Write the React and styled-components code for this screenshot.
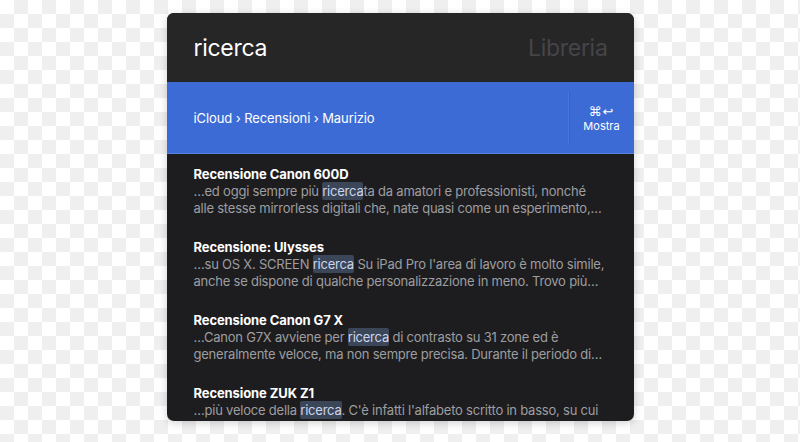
import React from "react";
import styled, { createGlobalStyle } from "styled-components";

const Global = createGlobalStyle`
  html, body { margin: 0; padding: 0; }
  body {
    width: 800px;
    height: 442px;
    overflow: hidden;
    background-color: #ffffff;
    background-image:
      linear-gradient(45deg, #efefef 25%, transparent 25%, transparent 75%, #efefef 75%),
      linear-gradient(45deg, #efefef 25%, transparent 25%, transparent 75%, #efefef 75%);
    background-size: 28px 28px;
    background-position: 0 0, 14px 14px;
    font-family: Inter, "Liberation Sans", Arial, sans-serif;
  }
`;

const Page = styled.div`
  display: flex;
  justify-content: center;
  padding-top: 13px;
`;

const Panel = styled.div`
  width: 467px;
  height: 408px;
  border-radius: 7px;
  overflow: hidden;
  background: #1d1d1f;
  display: flex;
  flex-direction: column;
  box-shadow: 0 2px 8px rgba(0, 0, 0, 0.18);
`;

const Header = styled.div`
  height: 69px;
  flex: none;
  background: #262627;
  display: flex;
  align-items: center;
  justify-content: space-between;
  padding: 0 26px 0 27px;
  box-sizing: border-box;
`;

const Title = styled.div`
  font-size: 23px;
  letter-spacing: -0.3px;
  color: ${(p) => (p.$muted ? "#454547" : "#ffffff")};
`;

const Bar = styled.div`
  height: 72px;
  flex: none;
  background: #3d6bd5;
  display: flex;
  align-items: stretch;
  border-bottom: 1px solid #5a84e2;
  box-sizing: border-box;
`;

const Crumbs = styled.div`
  flex: 1;
  display: flex;
  align-items: center;
  padding-left: 27px;
  font-size: 13px;
  color: #ffffff;
  letter-spacing: -0.1px;
`;

const Action = styled.div`
  width: 64px;
  margin: 9px 0;
  border-left: 1px solid #3761c4;
  box-shadow: -1px 0 0 #4676dc;
  display: flex;
  flex-direction: column;
  align-items: center;
  justify-content: center;
  padding-top: 3px;
  color: #ffffff;
  font-size: 11px;
  line-height: 15px;
`;

const Keys = styled.div`
  font-family: "DejaVu Sans", sans-serif;
  font-size: 13px;
  line-height: 15px;
  letter-spacing: 1px;
`;

const List = styled.div`
  flex: 1;
  padding: 12px 26px 0 27px;
  display: flex;
  flex-direction: column;
  gap: 22px;
`;

const Item = styled.div`
  display: flex;
  flex-direction: column;
`;

const ItemTitle = styled.div`
  font-size: 13px;
  line-height: 17px;
  font-weight: 700;
  color: #ffffff;
  letter-spacing: -0.1px;
`;

const Line = styled.div`
  font-size: 13px;
  line-height: 17px;
  color: #9e9ea0;
  white-space: nowrap;
  letter-spacing: -0.22px;
`;

const Mark = styled.span`
  background: #3b4658;
  color: #ccd6ee;
  border-radius: 2px;
  padding: 1px 0;
`;

const items = [
  {
    title: "Recensione Canon 600D",
    lines: [
      ["…ed oggi sempre più ", "ricerca", "ta da amatori e professionisti, nonché"],
      ["alle stesse mirrorless digitali che, nate quasi come un esperimento,…"],
    ],
  },
  {
    title: "Recensione: Ulysses",
    lines: [
      ["…su OS X. SCREEN ", "ricerca", " Su iPad Pro l'area di lavoro è molto simile,"],
      ["anche se dispone di qualche personalizzazione in meno. Trovo più…"],
    ],
  },
  {
    title: "Recensione Canon G7 X",
    lines: [
      ["…Canon G7X avviene per ", "ricerca", " di contrasto su 31 zone ed è"],
      ["generalmente veloce, ma non sempre precisa. Durante il periodo di…"],
    ],
  },
  {
    title: "Recensione ZUK Z1",
    lines: [
      ["…più veloce della ", "ricerca", ". C'è infatti l'alfabeto scritto in basso, su cui"],
    ],
  },
];

export default function App() {
  return (
    <>
      <Global />
      <Page>
        <Panel>
          <Header>
            <Title>ricerca</Title>
            <Title $muted>Libreria</Title>
          </Header>
          <Bar>
            <Crumbs>iCloud › Recensioni › Maurizio</Crumbs>
            <Action>
              <Keys>⌘↩</Keys>
              <div>Mostra</div>
            </Action>
          </Bar>
          <List>
            {items.map((it) => (
              <Item key={it.title}>
                <ItemTitle>{it.title}</ItemTitle>
                {it.lines.map((parts, i) => (
                  <Line key={i}>
                    {parts[0]}
                    {parts[1] && <Mark>{parts[1]}</Mark>}
                    {parts[2]}
                  </Line>
                ))}
              </Item>
            ))}
          </List>
        </Panel>
      </Page>
    </>
  );
}
